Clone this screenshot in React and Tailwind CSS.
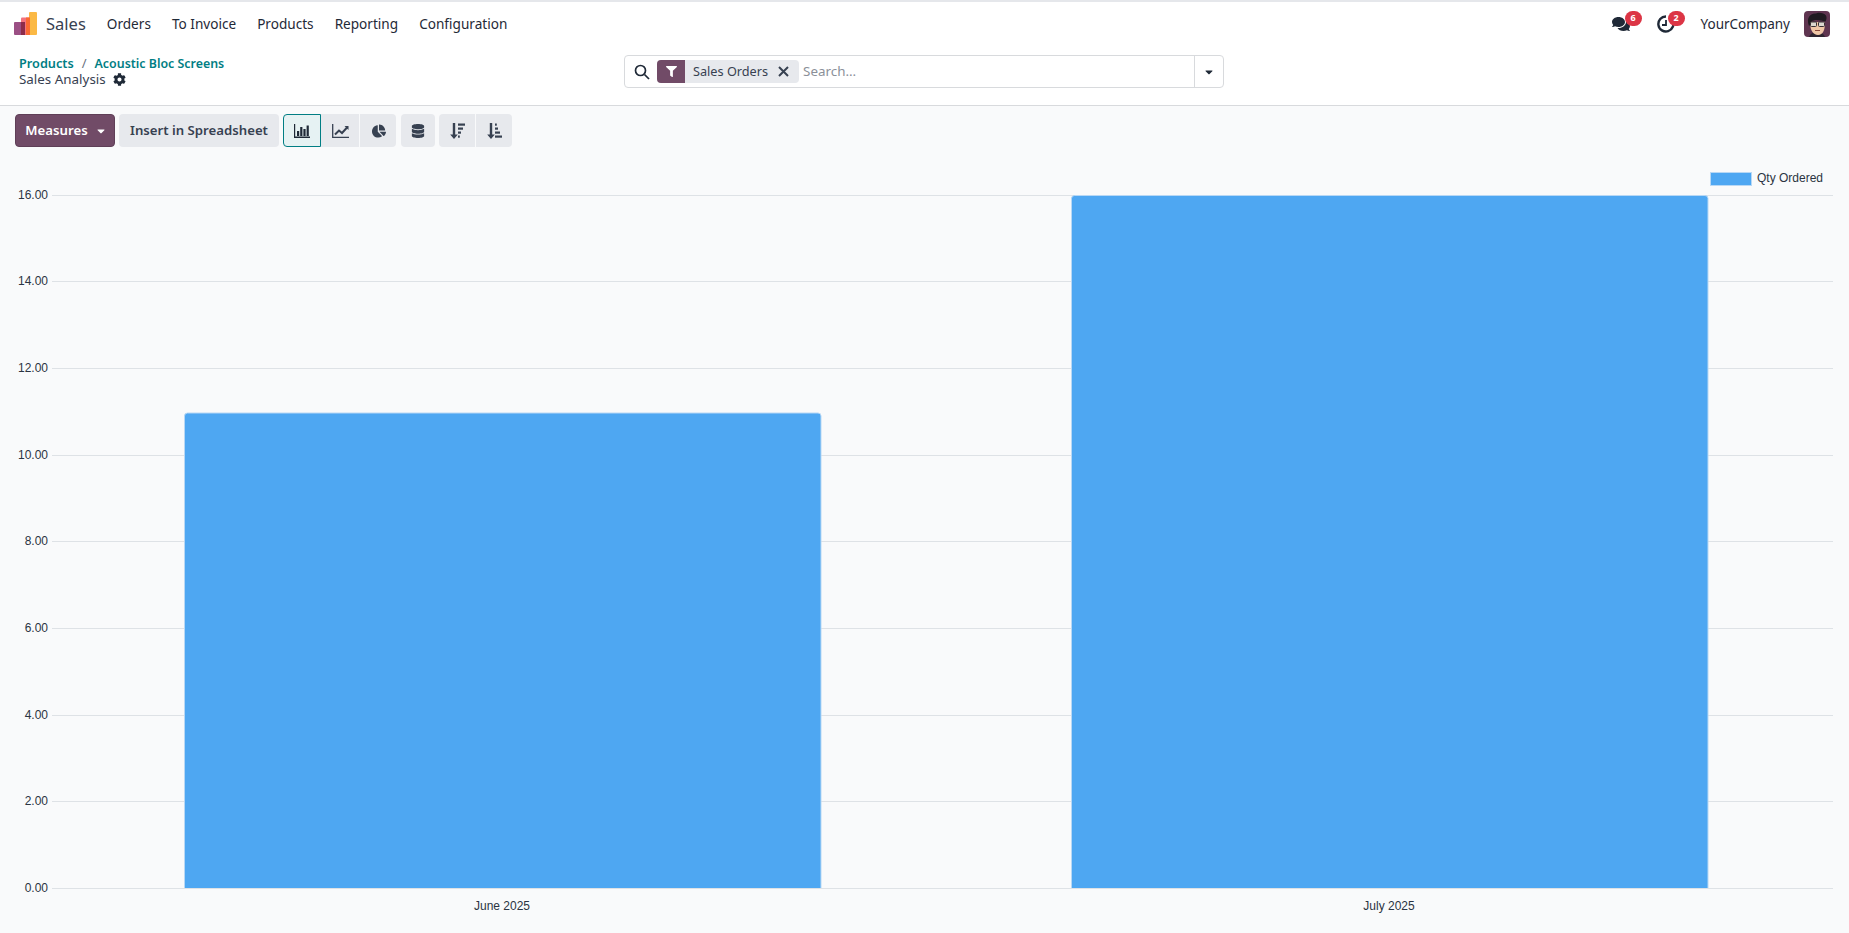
import React from 'react';
import { FaCog, FaComments, FaFilter, FaChartPie, FaDatabase, FaCaretDown } from 'react-icons/fa';

function BarIcon() {
  return (
    <svg width="16" height="14" viewBox="0 0 16 14" fill="currentColor">
      <path d="M0 0h1.2v12.6H16V14H0z" />
      <rect x="3" y="7" width="2.2" height="5" />
      <rect x="6.2" y="3" width="2.2" height="9" />
      <rect x="9.4" y="5" width="2.2" height="7" />
      <rect x="12.6" y="1.5" width="2.2" height="10.5" />
    </svg>
  );
}
function LineIcon() {
  return (
    <svg width="17" height="14" viewBox="0 0 17 14" fill="none" stroke="currentColor">
      <path d="M.7 0v13.3H17" strokeWidth="1.3" />
      <path d="M3 10.5l4-4 3 2.5 5.5-6" strokeWidth="2" />
      <path d="M12.5 2h4v4z" fill="currentColor" strokeWidth="0" />
    </svg>
  );
}
function SortDown() {
  return (
    <svg width="15" height="16" viewBox="0 0 15 16" fill="currentColor">
      <path d="M2.8 0h2.4v11.5h2.6L4 16 .2 11.5h2.6z" />
      <rect x="8" y="0.5" width="7" height="2.2" />
      <rect x="8" y="4.5" width="5" height="2.2" />
      <rect x="8" y="8.5" width="3" height="2.2" />
      <rect x="8" y="12.5" width="1.8" height="2.2" />
    </svg>
  );
}
function SortUp() {
  return (
    <svg width="15" height="16" viewBox="0 0 15 16" fill="currentColor">
      <path d="M2.8 0h2.4v11.5h2.6L4 16 .2 11.5h2.6z" />
      <rect x="8" y="0.5" width="1.8" height="2.2" />
      <rect x="8" y="4.5" width="3" height="2.2" />
      <rect x="8" y="8.5" width="5" height="2.2" />
      <rect x="8" y="12.5" width="7" height="2.2" />
    </svg>
  );
}
function Logo() {
  return (
    <svg width="23" height="23" viewBox="0 0 23 23">
      <rect x="15" y="0" width="8" height="23" rx="1" fill="#FBB945" />
      <rect x="7" y="5.5" width="9" height="17.5" rx="1" fill="#F2727F" />
      <rect x="12" y="5.5" width="4" height="17.5" fill="#FA6A32" />
      <rect x="0" y="10" width="11" height="13" rx="1" fill="#9B4F84" />
      <rect x="7" y="10" width="4" height="13" fill="#8D2B4A" />
    </svg>
  );
}
function Avatar() {
  return (
    <svg width="26" height="26" viewBox="0 0 26 26" className="rounded-[4px]">
      <rect width="26" height="26" fill="#5f3550" />
      <path d="M5 26c1-3 4-5 8-5s7 2 8 5z" fill="#2e2430" />
      <path d="M6 11c0 8 3 13 8 13s7-5 7-13z" fill="#f0c6a6" />
      <path d="M5 15C2 7 6 2 12 2.5c2-1.500 8-1 10 2 1 2 .5 4-.5 6-3-1-6-1.500-9-1.500-2 0-4 .5-5 1.500-.5 1.500-1 3-2.500 4.500z" fill="#1f1a20" />
      <rect x="6.5" y="11" width="6" height="4.5" rx="1" fill="#ddd8d0" stroke="#3a3034" strokeWidth="1" />
      <rect x="14.5" y="11" width="6" height="4.5" rx="1" fill="#ddd8d0" stroke="#3a3034" strokeWidth="1" />
      <path d="M11 19.5h5" stroke="#8a4a3a" strokeWidth="1" />
    </svg>
  );
}
function ClockIcon() {
  return (
    <svg width="18" height="18" viewBox="0 0 18 18" fill="none" stroke="#1f2937" strokeWidth="2.4">
      <path d="M15.5 5.5A7.5 7.5 0 1 1 9 1.5" />
      <path d="M9 5v5H5" strokeWidth="1.8" />
    </svg>
  );
}

const sans = 'font-["Noto_Sans","Open_Sans",sans-serif]';

const ticks = [
  ['16.00', 195.5], ['14.00', 281.5], ['12.00', 368.5], ['10.00', 455.5],
  ['8.00', 541.5], ['6.00', 628.5], ['4.00', 715.5], ['2.00', 801.5], ['0.00', 888.5],
];
const labelColor = '#2b3442';

function Chart() {
  return (
    <svg width="1849" height="783" viewBox="0 150 1849 783" className="block mt-[3px]">
      {ticks.map(([t, y]) => (
        <g key={t}>
          <line x1="52" x2="1833" y1={y} y2={y} stroke="#dee2e6" />
          <text x="48" y={y + 3} textAnchor="end" fontSize="12" fill={labelColor} fontFamily="Liberation Sans">{t}</text>
        </g>
      ))}
      <path d="M184.5 888V416a3 3 0 0 1 3-3H818a3 3 0 0 1 3 3v472" fill="#4EA7F2" stroke="#b8d8f5" strokeWidth="1" />
      <path d="M1071.5 888V198.500a3 3 0 0 1 3-3H1705a3 3 0 0 1 3 3V888" fill="#4EA7F2" stroke="#b8d8f5" strokeWidth="1" />
      <text x="502" y="910" textAnchor="middle" fontSize="12" fill={labelColor} fontFamily="Liberation Sans">June 2025</text>
      <text x="1389" y="910" textAnchor="middle" fontSize="12" fill={labelColor} fontFamily="Liberation Sans">July 2025</text>
      <rect x="1710.5" y="172.5" width="41" height="13" fill="#4EA7F2" stroke="#b8d8f5" strokeWidth="1" />
      <text x="1757" y="182" fontSize="12" fill={labelColor} fontFamily="Liberation Sans">Qty Ordered</text>
    </svg>
  );
}

export default function App() {
  return (
    <div className={`w-[1849px] h-[933px] overflow-hidden bg-[#f9fafb] text-[#374151] ${sans}`}>
      <header className="h-[46px] pb-[1px] bg-white border-t-2 border-[#e5e7eb] flex items-center justify-between pl-[14px] pr-[19px]">
        <div className="flex items-center">
          <Logo />
          <span className="ml-[9px] pt-[1px] text-[16.5px] text-[#374151]">Sales</span>
          <nav className="flex items-center gap-[21px] ml-[21px] pt-[1px] text-[13.6px] text-[#1f2937]">
            <span>Orders</span>
            <span>To Invoice</span>
            <span>Products</span>
            <span>Reporting</span>
            <span>Configuration</span>
          </nav>
        </div>
        <div className="flex items-center text-[#1f2937]">
          <div className="relative mr-[27px]">
            <FaComments className="text-[18px] text-[#1f2937]" />
            <span className="absolute -top-[4px] left-[13px] w-[17px] h-[15px] rounded-full bg-[#dc3545] text-white text-[9px] font-bold flex items-center justify-center">6</span>
          </div>
          <div className="relative mr-[26px]">
            <ClockIcon />
            <span className="absolute -top-[4px] left-[11px] w-[17px] h-[15px] rounded-full bg-[#dc3545] text-white text-[9px] font-bold flex items-center justify-center">2</span>
          </div>
          <span className="text-[13.5px] pt-[1px] mr-[14px]">YourCompany</span>
          <Avatar />
        </div>
      </header>
      <section className="h-[60px] bg-white border-b border-[#d8dadd] relative flex items-start pl-[19px]">
        <div className="pt-[10px]">
          <div className="flex items-center h-[16px] font-semibold text-[#017e84]">
            <span className="text-[12.7px]">Products</span>
            <span className="mx-[8px] text-[13px] font-normal text-[#6b7280]">/</span>
            <span className="text-[12.4px]">Acoustic Bloc Screens</span>
          </div>
          <div className="flex items-center h-[18px] -mt-[2px] text-[13.4px] text-[#374151]">
            <span>Sales Analysis</span>
            <FaCog className="ml-[7px] text-[13px] text-[#1f2937]" />
          </div>
        </div>
        <div className="absolute left-[624px] top-[9px] w-[600px] h-[33px] flex border border-[#d8dadd] rounded-[4px] bg-white">
          <div className="flex items-center flex-1 pl-[9px]">
            <svg width="16" height="16" viewBox="0 0 16 16" fill="none" stroke="#1f2937" strokeWidth="1.7">
              <circle cx="6.5" cy="6.5" r="5" />
              <path d="M10.5 10.5l4.5 4.5" />
            </svg>
            <div className="flex items-center h-[23px] ml-[7px] rounded-[4px] bg-[#e7e9ed] overflow-hidden">
              <span className="w-[28px] h-full bg-[#714B67] flex items-center justify-center text-white">
                <FaFilter className="text-[11px]" />
              </span>
              <span className="ml-[8px] text-[12.7px] text-[#374151]">Sales Orders</span>
              <svg className="ml-[10px] mr-[10px]" width="11" height="11" viewBox="0 0 11 11" stroke="#374151" strokeWidth="2">
                <path d="M1 1l9 9M10 1l-9 9" />
              </svg>
            </div>
            <span className="ml-[4px] text-[13.4px] text-[#8b9099]">Search...</span>
          </div>
          <div className="w-[29px] border-l border-[#d8dadd] flex items-center justify-center text-[#1f2937]">
            <FaCaretDown className="text-[12px]" />
          </div>
        </div>
      </section>
      <div className="flex items-center h-[33px] mt-[8px] pl-[15px] font-medium">
        <button className="w-[100px] h-[33px] pl-[2px] rounded-[4px] bg-[#714B67] border border-[#5f3f57] text-white text-[13.2px] font-semibold flex items-center justify-center gap-[7px]">
          Measures <FaCaretDown className="text-[12px]" />
        </button>
        <button className="ml-[4px] w-[160px] h-[33px] rounded-[4px] bg-[#e7e9ed] text-[#374151] text-[13.2px] font-semibold flex items-center justify-center">
          Insert in Spreadsheet
        </button>
        <div className="flex ml-[4px] text-[#374151]">
          <button className="w-[38px] h-[33px] rounded-l-[4px] bg-[#e6f2f3] border border-[#017e84] flex items-center justify-center text-[#1f2937]"><BarIcon /></button>
          <button className="w-[38px] h-[33px] bg-[#e7e9ed] flex items-center justify-center"><LineIcon /></button>
          <button className="w-[36px] h-[33px] ml-[1px] pl-[2px] rounded-r-[4px] bg-[#e7e9ed] flex items-center justify-center"><FaChartPie className="text-[14px]" /></button>
        </div>
        <button className="ml-[5px] w-[34px] h-[33px] rounded-[4px] bg-[#e7e9ed] flex items-center justify-center text-[#374151]"><FaDatabase className="text-[14px]" /></button>
        <div className="flex ml-[4px] text-[#374151]">
          <button className="w-[36px] h-[33px] rounded-l-[4px] bg-[#e7e9ed] flex items-center justify-center"><SortDown /></button>
          <button className="w-[36px] h-[33px] ml-[1px] rounded-r-[4px] bg-[#e7e9ed] flex items-center justify-center"><SortUp /></button>
        </div>
      </div>
      <Chart />
    </div>
  );
}
